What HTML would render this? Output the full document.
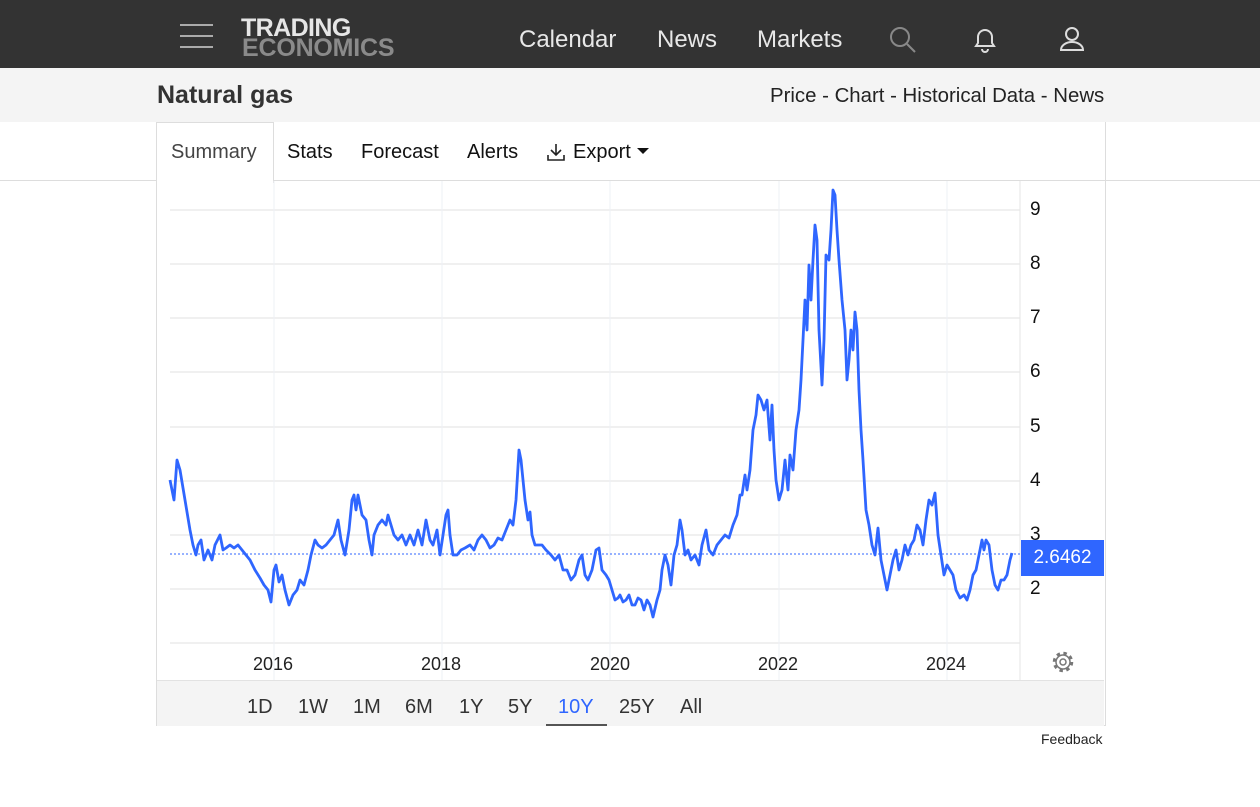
<!DOCTYPE html><html><head><meta charset="utf-8"><style>
body{margin:0;width:1260px;height:807px;background:#fff;font-family:"Liberation Sans",Arial,sans-serif;position:relative;overflow:hidden}
.a{position:absolute}
.hdr{left:0;top:0;width:1260px;height:68px;background:#333}
.nav{color:#e8e8e8;font-size:24px;top:26px}
.sub{left:0;top:68px;width:1260px;height:54px;background:#f4f4f4}
.tab{font-size:20px;top:141px;color:#111}
.rng{font-size:20px;top:696px;color:#333}
.yl{font-size:19px;left:1030px;color:#111}
.xl{font-size:18px;top:654px;color:#222}
</style></head><body>
<div class="a hdr"></div>
<div class="a" style="left:180px;top:24px;width:33px;height:2px;background:#aaa"></div>
<div class="a" style="left:180px;top:35px;width:33px;height:2px;background:#aaa"></div>
<div class="a" style="left:180px;top:46px;width:33px;height:2px;background:#aaa"></div>
<div class="a" style="left:241px;top:17px;font-size:25px;font-weight:bold;color:#e6e6e6;letter-spacing:-0.6px;line-height:22px">TRADING</div>
<div class="a" style="left:242px;top:37px;font-size:25px;font-weight:bold;color:#8a8a8a;letter-spacing:-0.2px;line-height:22px">ECONOMICS</div>
<div class="a nav" style="left:519px">Calendar</div>
<div class="a nav" style="left:657px">News</div>
<div class="a nav" style="left:757px">Markets</div>
<svg class="a" style="left:888px;top:25px" width="30" height="30"><circle cx="12" cy="12" r="9" stroke="#888" stroke-width="2" fill="none"/><line x1="19" y1="19" x2="27" y2="27" stroke="#888" stroke-width="2"/></svg>
<svg class="a" style="left:972px;top:26px" width="26" height="28"><path d="M4 20 L6 17 V11 a7 7 0 0 1 14 0 V17 L22 20 Z" stroke="#ddd" stroke-width="2" fill="none"/><path d="M10 23 a3 3 0 0 0 6 0" stroke="#ddd" stroke-width="2" fill="none"/></svg>
<svg class="a" style="left:1058px;top:25px" width="28" height="28"><circle cx="14" cy="9" r="6" stroke="#ddd" stroke-width="2" fill="none"/><path d="M3 25 a11 8 0 0 1 22 0 Z" stroke="#ddd" stroke-width="2" fill="none"/></svg>
<div class="a sub"></div>
<div class="a" style="left:157px;top:81px;font-size:25px;font-weight:bold;color:#333">Natural gas</div>
<div class="a" style="left:770px;top:85px;font-size:20.4px;color:#222">Price - Chart - Historical Data - News</div>
<div class="a" style="left:0;top:180px;width:1260px;height:1px;background:#ddd"></div>
<div class="a" style="left:156px;top:122px;width:948px;height:603px;border:1px solid #ddd;border-top:none"></div>
<div class="a" style="left:156px;top:122px;width:116px;height:60px;background:#fff;border:1px solid #ddd;border-bottom:none"></div>
<div class="a tab" style="left:171px;color:#444">Summary</div>
<div class="a tab" style="left:287px">Stats</div>
<div class="a tab" style="left:361px">Forecast</div>
<div class="a tab" style="left:467px">Alerts</div>
<svg class="a" style="left:546px;top:142px" width="22" height="20"><path d="M10 2 V13 M5 8 L10 13 L15 8 M2 13 V18 H18 V13" stroke="#222" stroke-width="1.6" fill="none"/></svg>
<div class="a tab" style="left:573px">Export</div>
<svg class="a" style="left:636px;top:147px" width="14" height="8"><path d="M1 1 H13 L7 7 Z" fill="#111"/></svg>
<svg class="a" style="left:156px;top:181px" width="948" height="499">
<g stroke="#e6e6e6" stroke-width="1.3">
<line x1="14" y1="29" x2="864" y2="29"/><line x1="14" y1="83" x2="864" y2="83"/><line x1="14" y1="137" x2="864" y2="137"/><line x1="14" y1="191" x2="864" y2="191"/><line x1="14" y1="246" x2="864" y2="246"/><line x1="14" y1="300" x2="864" y2="300"/><line x1="14" y1="354" x2="864" y2="354"/><line x1="14" y1="408" x2="864" y2="408"/><line x1="14" y1="462" x2="864" y2="462"/>
</g>
<g stroke="#eef1f6"><line x1="118" y1="0" x2="118" y2="499"/><line x1="286" y1="0" x2="286" y2="499"/><line x1="454" y1="0" x2="454" y2="499"/><line x1="623" y1="0" x2="623" y2="499"/><line x1="791" y1="0" x2="791" y2="499"/><line x1="864" y1="0" x2="864" y2="499" stroke="#e6e6e6"/></g>
<line x1="14" y1="373" x2="866" y2="373" stroke="#2f66ff" stroke-width="1" stroke-dasharray="2,2"/>
<g transform="translate(-156,-181)"><polyline fill="none" stroke="#2f66ff" stroke-width="2.8" stroke-linejoin="round" points="170,480 174,500 177,460 180,470 185,500 190,530 193,545 196,555 198,545 201,540 204,560 208,550 212,560 215,545 220,535 223,550 226,548 230,545 234,548 238,545 242,550 246,555 250,560 255,570 260,578 264,585 268,590 271,602 274,570 276,565 279,582 282,575 285,590 289,605 293,595 297,590 300,580 304,585 308,570 311,555 315,540 318,545 322,548 326,545 330,540 334,535 338,520 341,540 345,555 349,530 352,500 354,495 356,510 358,495 362,515 366,520 369,540 372,555 374,535 378,525 382,520 386,525 388,515 391,525 394,535 398,540 402,535 406,545 410,535 414,545 418,530 422,545 426,520 430,540 433,545 437,530 440,555 443,535 446,515 448,510 450,535 453,555 457,555 461,550 465,548 470,545 474,550 478,540 482,535 486,540 490,548 494,545 498,538 502,540 506,530 510,520 513,525 516,500 519,450 521,460 523,480 525,500 528,520 530,512 532,535 535,545 539,545 542,545 546,550 551,555 555,560 559,555 563,570 567,570 571,580 575,575 579,560 582,555 585,575 588,580 592,570 596,550 599,548 602,570 606,575 609,580 612,590 615,600 618,598 620,595 623,602 626,600 629,595 632,605 635,605 638,598 641,600 644,610 647,600 650,605 653,617 657,600 660,590 662,570 665,555 668,565 671,585 674,555 677,545 680,520 682,530 685,555 688,550 691,560 695,555 699,565 702,545 706,530 709,550 713,555 717,545 721,540 725,535 729,538 733,525 737,515 740,495 742,495 745,475 747,490 750,470 753,430 756,415 758,395 761,400 764,410 767,400 770,440 772,405 774,450 776,480 779,500 782,490 785,460 788,490 790,455 793,470 796,430 799,410 801,380 803,340 805,300 807,330 809,265 811,300 813,260 815,225 817,240 819,330 822,385 824,340 826,255 829,260 831,230 833,190 835,195 837,230 839,260 842,300 845,330 847,380 849,360 851,330 853,350 855,312 857,330 859,390 861,430 863,460 866,510 869,525 872,545 875,555 878,528 881,560 884,575 887,590 890,575 893,560 896,550 899,570 902,560 905,545 908,555 911,545 914,540 917,525 920,530 923,545 926,520 929,500 932,505 935,493 938,535 941,555 944,575 947,565 950,570 953,575 956,590 960,598 964,595 967,600 970,590 973,575 976,570 979,555 982,540 984,550 986,540 989,545 992,570 995,585 998,590 1001,580 1004,580 1007,575 1010,560 1012,553"/></g>
</svg>
<div class="a yl" style="top:199px">9</div><div class="a yl" style="top:253px">8</div><div class="a yl" style="top:307px">7</div><div class="a yl" style="top:361px">6</div><div class="a yl" style="top:416px">5</div><div class="a yl" style="top:470px">4</div><div class="a yl" style="top:524px">3</div><div class="a yl" style="top:578px">2</div>
<div class="a" style="left:1021px;top:540px;width:83px;height:36px;background:#2f66ff;color:#fff;font-size:19px;line-height:36px;text-align:center">2.6462</div>
<div class="a xl" style="left:253px">2016</div><div class="a xl" style="left:421px">2018</div><div class="a xl" style="left:590px">2020</div><div class="a xl" style="left:758px">2022</div><div class="a xl" style="left:926px">2024</div>
<svg class="a" style="left:1051px;top:650px" width="24" height="24" viewBox="0 0 24 24"><circle cx="12" cy="12" r="8.5" fill="none" stroke="#777" stroke-width="3.5" stroke-dasharray="3.3,3.4"/><circle cx="12" cy="12" r="7" fill="#fff" stroke="#777" stroke-width="1.5"/><circle cx="12" cy="12" r="3" fill="none" stroke="#777" stroke-width="1.5"/></svg>
<div class="a" style="left:157px;top:680px;width:947px;height:45px;background:#f4f4f4;border-top:1px solid #e2e2e2"></div>
<div class="a rng" style="left:247px">1D</div><div class="a rng" style="left:298px">1W</div><div class="a rng" style="left:353px">1M</div><div class="a rng" style="left:405px">6M</div><div class="a rng" style="left:459px">1Y</div><div class="a rng" style="left:508px">5Y</div><div class="a rng" style="left:558px;color:#2f66ff">10Y</div><div class="a rng" style="left:619px">25Y</div><div class="a rng" style="left:680px">All</div>
<div class="a" style="left:546px;top:724px;width:61px;height:2px;background:#555"></div>
<div class="a" style="left:1041px;top:731px;font-size:14px;color:#222">Feedback</div>
</body></html>
